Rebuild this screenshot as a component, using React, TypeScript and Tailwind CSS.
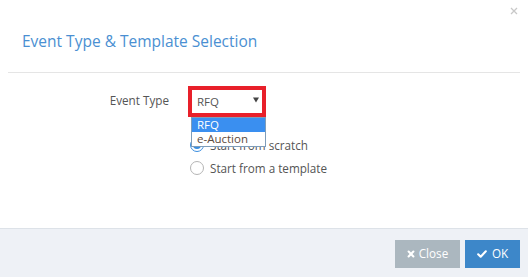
import React from "react";

export default function App() {
  return (
    <div
      className="relative flex h-[277px] w-[528px] flex-col bg-white text-[#555]"
      style={{ fontFamily: '"Open Sans", sans-serif' }}
    >
      {/* header */}
      <div className="relative h-[72px] shrink-0">
        <svg className="absolute left-[510px] top-[7px]" width="8" height="8" viewBox="0 0 8 8">
          <path d="M1 1L7 7M7 1L1 7" stroke="#c8c8c8" strokeWidth="1.3" />
        </svg>
        <div className="pl-[22px] pt-[30px] text-[15.5px] leading-[22px] text-[#4a8fd2]">
          Event Type &amp; Template Selection
        </div>
      </div>
      <div className="mx-[8px] shrink-0 border-t border-[#e5e5e5]" />

      {/* body */}
      <div className="flex-1 pt-[13px]">
        <div className="flex items-start">
          <div className="w-[170px] pr-[1px] pt-[5px] text-right text-[11.7px] leading-[18px] text-[#555]">Event Type</div>
          <div className="relative ml-[18px]">
            <div className="flex h-[31px] w-[78px] items-center justify-between border-4 border-[#e8202a] bg-white pl-[5px] pr-[3px]">
              <span className="text-[11.5px] text-[#555]">RFQ</span>
              <svg width="6" height="6" viewBox="0 0 6 6" className="mb-[3px]">
                <path d="M0 0.5H6L3 5.5Z" fill="#444" />
              </svg>
            </div>
            <div className="absolute left-[3px] top-[31px] z-10 w-[75px] border border-[#7f9db9] bg-white text-[11.5px] leading-[13.5px]">
              <div className="bg-[#3a8ff0] pl-[5px] text-white">RFQ</div>
              <div className="pl-[5px] pb-[1px] text-[#5c4a3c]">e-Auction</div>
            </div>
          </div>
        </div>
        <div className="ml-[190px] mt-[21px] flex flex-col gap-[9px]">
          <label className="flex items-center gap-[6px] text-[11.7px] leading-[14px] text-[#555]">
            <span className="flex h-[14px] w-[14px] items-center justify-center rounded-full border border-[#3a8ee0] bg-white">
              <span className="h-[8px] w-[8px] rounded-full bg-[#3a8ee0]" />
            </span>
            Start from scratch
          </label>
          <label className="flex items-center gap-[6px] text-[11.7px] leading-[14px] text-[#555]">
            <span className="h-[14px] w-[14px] rounded-full border border-[#b5b5b5] bg-white" />
            Start from a template
          </label>
        </div>
      </div>

      {/* footer */}
      <div className="flex h-[49px] shrink-0 items-start justify-end gap-[5px] border-t border-[#dde2e8] bg-[#eef1f6] pr-[8px] pt-[11px]">
        <button className="flex h-[28px] w-[65px] items-center justify-center gap-[4px] bg-[#abb7bf] text-[11.7px] text-white">
          <svg width="8" height="8" viewBox="0 0 10 10">
            <path d="M2 2L8 8M8 2L2 8" stroke="white" strokeWidth="2.6" strokeLinecap="round" />
          </svg>
          Close
        </button>
        <button className="flex h-[28px] w-[55px] items-center justify-center gap-[5px] bg-[#3d87c9] text-[11.7px] text-white">
          <svg width="10" height="8" viewBox="0 0 11 9">
            <path d="M1.2 4.8L4 7.5L9.8 1.5" stroke="white" strokeWidth="2.4" fill="none" strokeLinecap="round" strokeLinejoin="round" />
          </svg>
          OK
        </button>
      </div>
    </div>
  );
}
